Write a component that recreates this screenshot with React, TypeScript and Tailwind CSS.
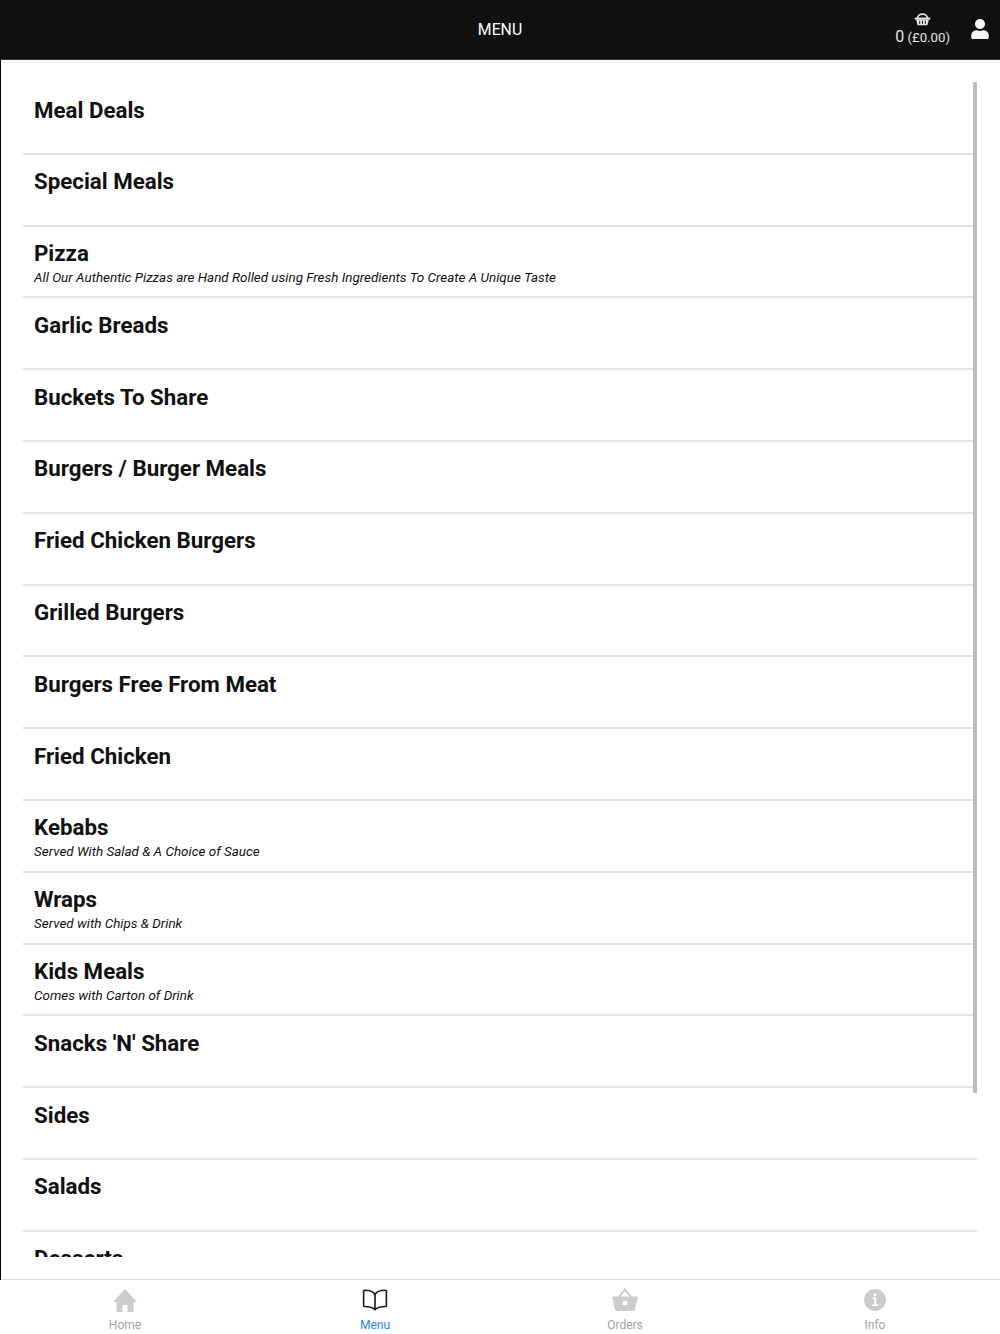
import { FaUser } from "react-icons/fa";
import { IoBookOutline, IoInformationCircle } from "react-icons/io5";

const rows = [
  { name: "Meal Deals" },
  { name: "Special Meals" },
  { name: "Pizza", note: "All Our Authentic Pizzas are Hand Rolled using Fresh Ingredients To Create A Unique Taste" },
  { name: "Garlic Breads" },
  { name: "Buckets To Share" },
  { name: "Burgers / Burger Meals" },
  { name: "Fried Chicken Burgers" },
  { name: "Grilled Burgers" },
  { name: "Burgers Free From Meat" },
  { name: "Fried Chicken" },
  { name: "Kebabs", note: "Served With Salad & A Choice of Sauce" },
  { name: "Wraps", note: "Served with Chips & Drink" },
  { name: "Kids Meals", note: "Comes with Carton of Drink" },
  { name: "Snacks 'N' Share" },
  { name: "Sides" },
  { name: "Salads" },
  { name: "Desserts" },
];

const BasketIcon = () => (
  <svg viewBox="0 0 24 20" className="h-[14px] w-[17px]" fill="none" stroke="#e8e8e8">
    <path d="M5 9C5 1 19 1 19 9" strokeWidth="2.4" />
    <path d="M1 8h22v3H1z" fill="#e8e8e8" strokeWidth="0" />
    <path d="M3 11h18l-2 8H5z" fill="#e8e8e8" strokeWidth="0" />
    <path d="M8 12.5v4.5M12 12.5v4.5M16 12.5v4.5" stroke="#111" strokeWidth="1.4" />
  </svg>
);

const HomeIcon = () => (
  <svg viewBox="0 0 24 23" className="h-[23px] w-[24px]" fill="#cccccc">
    <path d="M12 0L24 13h-3.500v10H14.500v-7h-5v7H3.500V13H0z" />
  </svg>
);

const OrdersIcon = () => (
  <svg viewBox="0 0 26 23" className="h-[23px] w-[26px]" fill="#cccccc">
    <path d="M13 0l7.500 9h-2.600L13 3.200 8.100 9H5.500z" />
    <path fillRule="evenodd" d="M0 8.500h26l-3 13a2 2 0 0 1-2 1.500H5a2 2 0 0 1-2-1.500zM13 12.500a2.500 2.500 0 1 0 0 5 2.500 2.500 0 0 0 0-5z" />
  </svg>
);

export default function App() {
  return (
    <div className="flex h-[1334px] flex-col overflow-hidden bg-white font-['Roboto',sans-serif]">
      <header className="grid h-[60px] shrink-0 grid-cols-[1fr_auto_1fr] items-center border-b border-[#333] bg-[#111111] text-white">
        <div />
        <div className="text-[15.8px] leading-none">MENU</div>
        <div className="flex items-center justify-end pr-[11px]">
          <div className="flex flex-col items-center text-[#e4e4e4]">
            <BasketIcon />
            <div className="mt-[1px] whitespace-nowrap text-[13.2px] leading-[20px]">
              <span className="text-[16px]">0</span> (£0.00)
            </div>
          </div>
          <FaUser className="ml-[21px] h-[20px] w-[18px] -translate-y-[1px] text-[#f4f4f4]" />
        </div>
      </header>

      <main className="relative flex-1 overflow-hidden border-l border-black">
        <div className="h-[1197px] overflow-hidden pt-[23px] pl-[22px] pr-[23px]">
          {rows.map((row) => (
            <div key={row.name} className="h-[71.8px] overflow-hidden border-b-2 border-[#e2e2e2] pl-[11px] pt-[12.5px] text-[#111]">
              <div className="whitespace-nowrap text-[22.3px] font-bold leading-[29px]">{row.name}</div>
              {row.note && <div className="mt-[1px] whitespace-nowrap text-[13.45px] italic leading-[18px]">{row.note}</div>}
            </div>
          ))}
        </div>
        <div className="absolute left-[972px] top-[22px] h-[1011px] w-[4px] bg-[#bcbcbc]" />
      </main>

      <nav className="-mt-[1px] grid h-[55px] shrink-0 grid-cols-4 border-t border-[#dcdcdc] bg-white text-[12px] text-[#a3a3a3]">
        <div className="flex flex-col items-center pt-[9px]">
          <HomeIcon />
          <span className="mt-[5px] leading-[16px]">Home</span>
        </div>
        <div className="flex flex-col items-center pt-[7px]">
          <IoBookOutline className="h-[26px] w-[26px] text-[#1a1a1a]" />
          <span className="mt-[4px] leading-[16px] text-[#1e88f5]">Menu</span>
        </div>
        <div className="flex flex-col items-center pt-[8px]">
          <OrdersIcon />
          <span className="mt-[6px] leading-[16px]">Orders</span>
        </div>
        <div className="flex flex-col items-center pt-[6px]">
          <IoInformationCircle className="h-[28px] w-[28px] text-[#cccccc]" />
          <span className="mt-[3px] leading-[16px]">Info</span>
        </div>
      </nav>
    </div>
  );
}
